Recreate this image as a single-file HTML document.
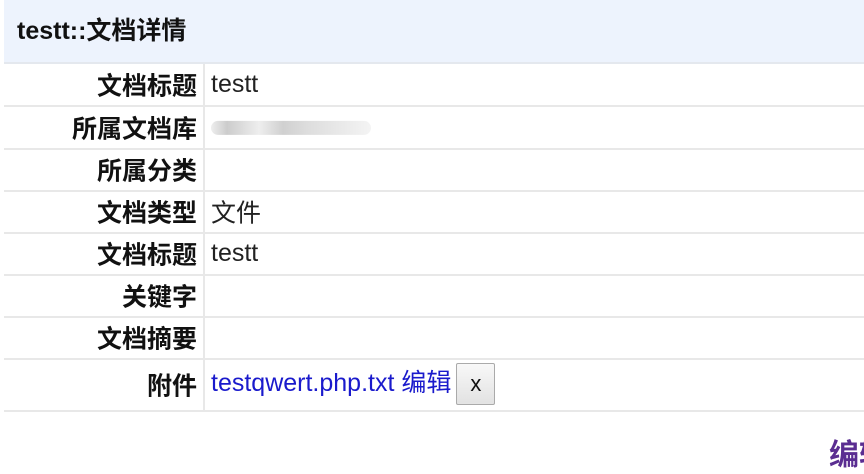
<!DOCTYPE html>
<html><head><meta charset="utf-8"><style>
body{margin:0;width:864px;height:466px;overflow:hidden;background:#fff;font-family:"Liberation Sans","Noto Sans CJK SC",sans-serif;}
.hd{position:absolute;left:4px;top:0;width:860px;height:62px;background:#edf3fd;border-bottom:2px solid #e4e8ee;}
.hd span{position:absolute;left:13px;top:11px;font-size:25px;font-weight:bold;color:#111;white-space:nowrap}
.row{position:absolute;left:4px;width:860px;border-bottom:2px solid #e8e8e8;}
.l{position:absolute;left:0;top:0;width:199px;height:100%;border-right:2px solid #e8e8e8;text-align:right;font-weight:bold;font-size:25px;color:#111;}
.l span,.v span{position:absolute;top:50%;transform:translateY(-52%);white-space:nowrap}
.l span{right:6px}
.v{position:absolute;left:207px;top:0;height:100%;font-size:25px;color:#222;}
.v span{left:0}
a{color:#1a1acc;text-decoration:none}
.btn{display:inline-block;vertical-align:middle;width:37px;height:40px;border:1px solid #aaa;border-radius:2px;background:linear-gradient(#f8f8f8,#e2e2e2);text-align:center;line-height:40px;font-size:22px;color:#111;margin-left:5px;font-style:normal}
.blur{display:inline-block;width:160px;height:14px;background:linear-gradient(90deg,#eee 0,#ccc 10%,#eee 30%,#d0d0d0 45%,#ddd 60%,#f4f4f4 100%);border-radius:7px}
</style></head><body>
<div class="hd"><span>testt::文档详情</span></div>
<div class="row" style="top:64px;height:41px"><div class="l"><span>文档标题</span></div><div class="v"><span>testt</span></div></div>
<div class="row" style="top:107px;height:41px"><div class="l"><span>所属文档库</span></div><div class="v"><span><i class="blur"></i></span></div></div>
<div class="row" style="top:150px;height:40px"><div class="l"><span>所属分类</span></div></div>
<div class="row" style="top:192px;height:40px"><div class="l"><span>文档类型</span></div><div class="v"><span>文件</span></div></div>
<div class="row" style="top:234px;height:40px"><div class="l"><span>文档标题</span></div><div class="v"><span>testt</span></div></div>
<div class="row" style="top:276px;height:40px"><div class="l"><span>关键字</span></div></div>
<div class="row" style="top:318px;height:40px"><div class="l"><span>文档摘要</span></div></div>
<div class="row" style="top:360px;height:50px"><div class="l"><span>附件</span></div><div class="v"><span><a>testqwert.php.txt</a> <a>编辑</a><i class="btn">x</i></span></div></div>
<div style="position:absolute;left:829px;top:430px;font-size:30px;font-weight:bold;color:#5a2d91;white-space:nowrap">编辑</div>
</body></html>
